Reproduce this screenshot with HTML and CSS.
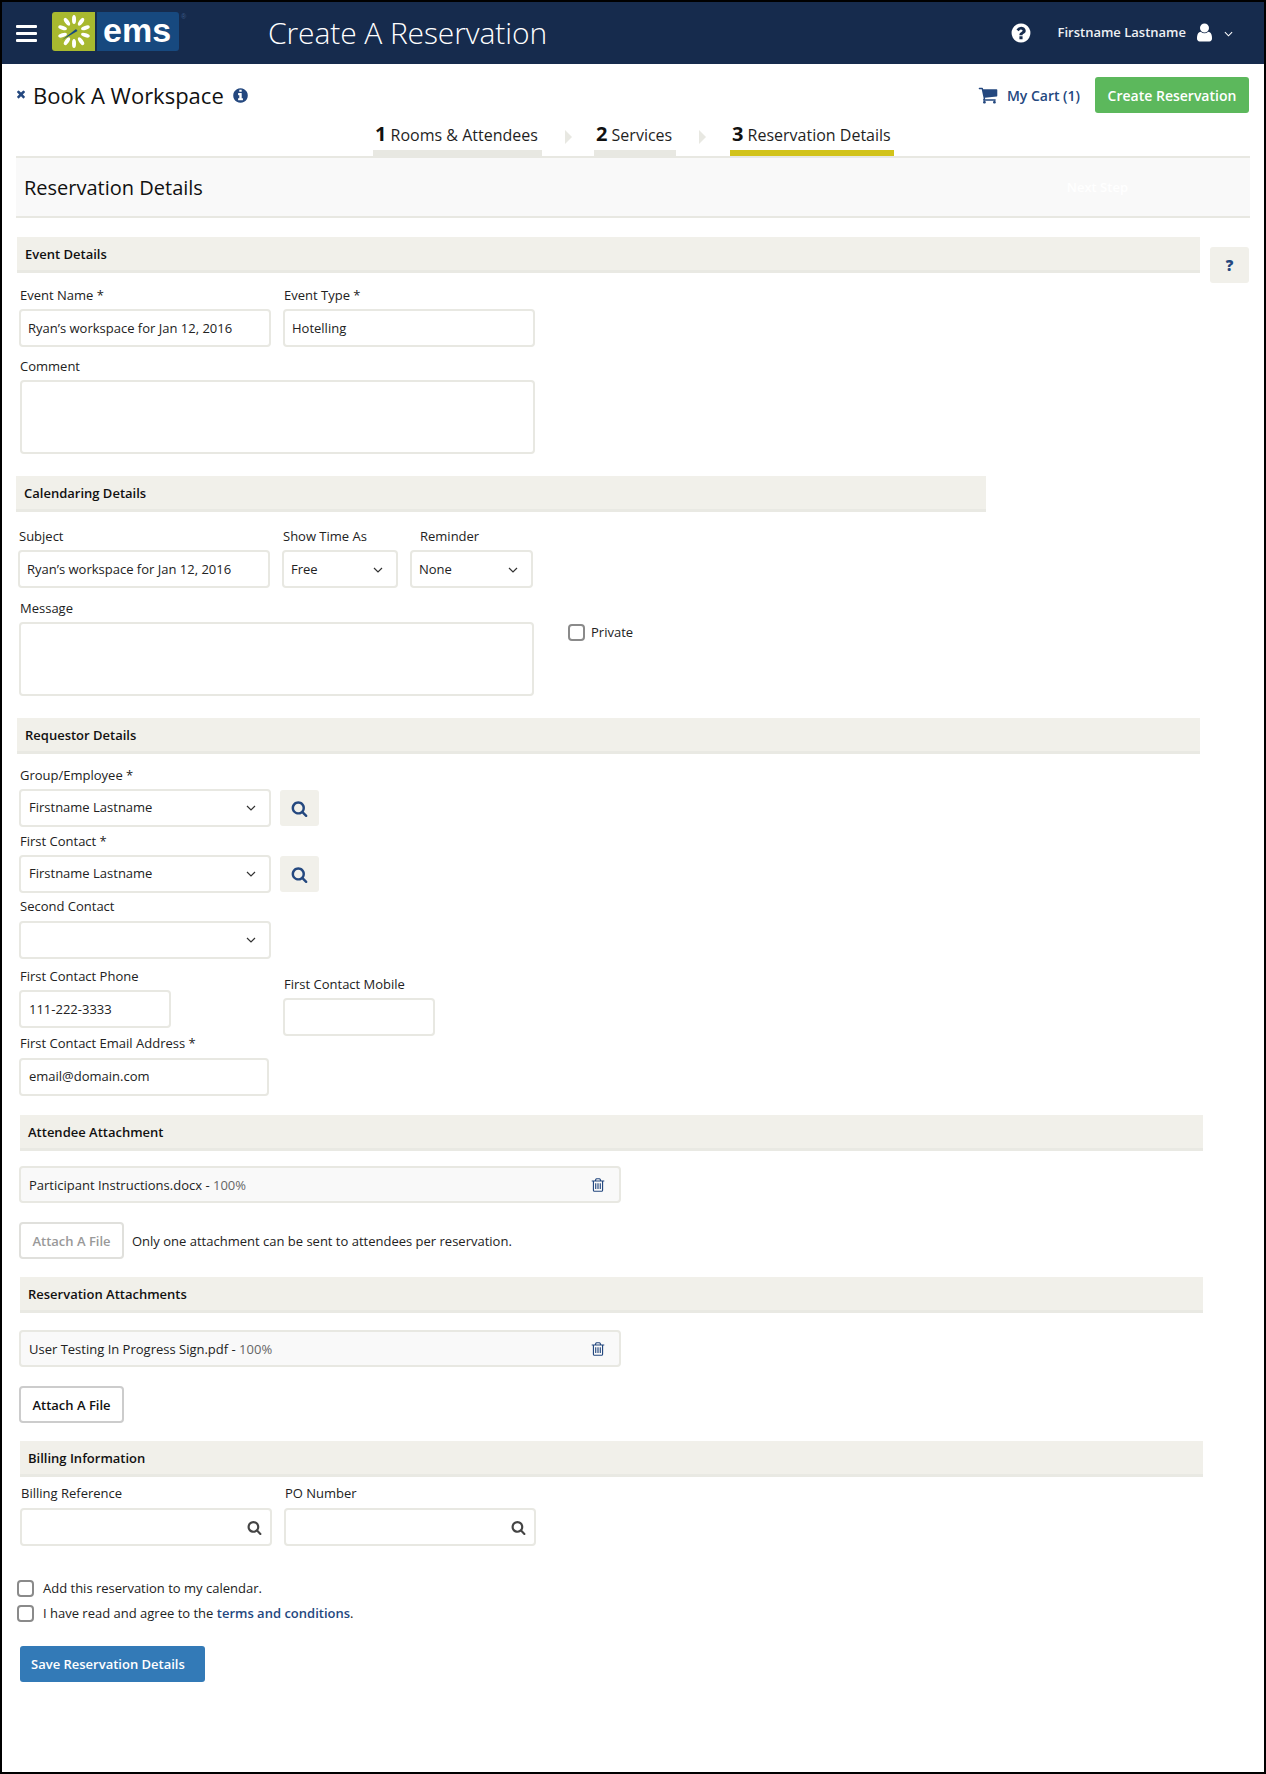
FILE: index.html
```html
<!DOCTYPE html>
<html lang="en-us">
<head>
    <meta charset="utf-8">
    <title>Create A Reservation</title>
    <link rel="stylesheet" href="styles.css">
</head>
<body>
    <svg class="icon-defs" xmlns="http://www.w3.org/2000/svg">
        <symbol id="i-search" viewBox="0 0 1792 1792"><path d="M1216 832q0-185-131.500-316.500t-316.500-131.500-316.500 131.500-131.500 316.500 131.500 316.500 316.500 131.500 316.500-131.500 131.500-316.500zm512 832q0 52-38 90t-90 38q-54 0-90-38l-343-342q-179 124-399 124-143 0-273.500-55.500t-225-150-150-225-55.500-273.500 55.500-273.500 150-225 225-150 273.500-55.500 273.500 55.500 225 150 150 225 55.500 273.500q0 220-124 399l343 343q37 37 37 90z"/></symbol>
        <symbol id="i-user" viewBox="0 0 1792 1792"><path d="M1536 1399q0 109-62.500 187t-150.500 78h-854q-88 0-150.500-78t-62.500-187q0-85 8.500-160.500t31.500-152 58.500-131 94-89 134.500-34.500q131 128 313 128t313-128q76 0 134.500 34.500t94 89 58.500 131 31.500 152 8.500 160.500zm-256-887q0 159-112.500 271.500t-271.500 112.500-271.500-112.500-112.500-271.500 112.500-271.500 271.500-112.500 271.500 112.500 112.500 271.500z"/></symbol>
        <symbol id="i-cart" viewBox="0 0 1792 1792"><path d="M704 1536q0 52-38 90t-90 38-90-38-38-90 38-90 90-38 90 38 38 90zm896 0q0 52-38 90t-90 38-90-38-38-90 38-90 90-38 90 38 38 90zm128-1088v512q0 24-16.500 42.500t-40.500 21.500l-1044 122q13 60 13 70 0 16-24 64h920q26 0 45 19t19 45-19 45-45 19h-1024q-26 0-45-19t-19-45q0-11 8-31.500t16-36 21.500-40 15.500-29.500l-177-823h-204q-26 0-45-19t-19-45 19-45 45-19h256q16 0 28.500 6.500t19.500 15.500 13 24.500 8 26 5.500 29.500 4.500 26h1201q26 0 45 19t19 45z"/></symbol>
        <symbol id="i-question" viewBox="0 0 1792 1792"><path d="M1024 1376v-192q0-14-9-23t-23-9h-192q-14 0-23 9t-9 23v192q0 14 9 23t23 9h192q14 0 23-9t9-23zm256-672q0-88-55.500-163t-138.500-116-170-41q-243 0-371 213-15 24 8 42l132 100q7 6 19 6 16 0 25-12 53-68 86-92 34-24 86-24 48 0 85.500 26t37.500 59q0 38-20 61t-68 45q-63 28-115.500 86.500t-52.500 125.500v36q0 14 9 23t23 9h192q14 0 23-9t9-23q0-19 21.500-49.500t54.500-49.500q32-18 49-28.500t46-35 44.500-48 28-60.500 12.500-81zm384 192q0 209-103 385.500t-279.500 279.500-385.500 103-385.500-103-279.500-279.500-103-385.500 103-385.500 279.500-279.500 385.500-103 385.500 103 279.500 279.500 103 385.500z"/></symbol>
        <symbol id="i-info" viewBox="0 0 1792 1792"><path d="M1152 1376v-160q0-14-9-23t-23-9h-96v-512q0-14-9-23t-23-9h-320q-14 0-23 9t-9 23v160q0 14 9 23t23 9h96v320h-96q-14 0-23 9t-9 23v160q0 14 9 23t23 9h448q14 0 23-9t9-23zm-128-896v-160q0-14-9-23t-23-9h-192q-14 0-23 9t-9 23v160q0 14 9 23t23 9h192q14 0 23-9t9-23zm640 416q0 209-103 385.500t-279.500 279.500-385.500 103-385.500-103-279.500-279.500-103-385.500 103-385.500 279.500-279.500 385.500-103 385.500 103 279.500 279.500 103 385.500z"/></symbol>
        <symbol id="i-times" viewBox="0 0 1792 1792"><path d="M1490 1322q0 40-28 68l-136 136q-28 28-68 28t-68-28l-294-294-294 294q-28 28-68 28t-68-28l-136-136q-28-28-28-68t28-68l294-294-294-294q-28-28-28-68t28-68l136-136q28-28 68-28t68 28l294 294 294-294q28-28 68-28t68 28l136 136q28 28 28 68t-28 68l-294 294 294 294q28 28 28 68z"/></symbol>
        <symbol id="i-trash" viewBox="0 0 1792 1792"><path d="M704 736v576q0 14-9 23t-23 9h-64q-14 0-23-9t-9-23v-576q0-14 9-23t23-9h64q14 0 23 9t9 23zm256 0v576q0 14-9 23t-23 9h-64q-14 0-23-9t-9-23v-576q0-14 9-23t23-9h64q14 0 23 9t9 23zm256 0v576q0 14-9 23t-23 9h-64q-14 0-23-9t-9-23v-576q0-14 9-23t23-9h64q14 0 23 9t9 23zm128 724v-948h-896v948q0 22 7 40.500t14.500 27 10.500 8.500h832q3 0 10.500-8.500t14.500-27 7-40.500zm-672-1076h448l-48-117q-7-9-17-11h-317q-10 2-17 11zm928 32v64q0 14-9 23t-23 9h-96v948q0 83-47 143.500t-113 60.500h-832q-66 0-113-58.500t-47-141.500v-952h-96q-14 0-23-9t-9-23v-64q0-14 9-23t23-9h309l70-167q15-37 54-63t79-26h320q40 0 79 26t54 63l70 167h309q14 0 23 9t9 23z"/></symbol>
        <symbol id="i-chevron" viewBox="0 0 10 6"><path d="M1 1l4 4 4-4" fill="none" stroke="currentColor" stroke-width="1.200"/></symbol>
    </svg>

    <div class="page">
        <header class="topbar">
            <div class="menu-btn"><span></span><span></span><span></span></div>
            <div class="logo">
                <svg class="logo-sun" width="43" height="39" viewBox="0 0 43 39">
                    <g fill="#fff">
                        <ellipse cx="22" cy="7.500" rx="2" ry="4.500"/>
                        <ellipse cx="22" cy="7.500" rx="2" ry="4.500" transform="rotate(36 22 19.500)"/>
                        <ellipse cx="22" cy="7.500" rx="2" ry="4.500" transform="rotate(72 22 19.500)"/>
                        <ellipse cx="22" cy="7.500" rx="2" ry="4.500" transform="rotate(108 22 19.500)"/>
                        <ellipse cx="22" cy="7.500" rx="2" ry="4.500" transform="rotate(144 22 19.500)"/>
                        <ellipse cx="22" cy="7.500" rx="2" ry="4.500" transform="rotate(180 22 19.500)"/>
                        <ellipse cx="22" cy="7.500" rx="2" ry="4.500" transform="rotate(216 22 19.500)"/>
                        <ellipse cx="22" cy="7.500" rx="2" ry="4.500" transform="rotate(252 22 19.500)"/>
                        <ellipse cx="22" cy="7.500" rx="2" ry="4.500" transform="rotate(288 22 19.500)"/>
                        <ellipse cx="22" cy="7.500" rx="2" ry="4.500" transform="rotate(324 22 19.500)"/>
                    </g>
                    <path d="M10 28L24 17l1.500 2z" fill="#17497f"/>
                </svg>
                <span class="logo-word">ems</span>
                <span class="logo-mark">®</span>
            </div>
            <div class="page-title">Create A Reservation</div>
            <div class="user-area">
                <svg class="help-icon"><use href="#i-question"/></svg>
                <span class="user-name">Firstname Lastname</span>
                <svg class="user-icon"><use href="#i-user"/></svg>
                <svg class="user-chevron"><use href="#i-chevron"/></svg>
            </div>
        </header>

        <div class="titlebar">
            <svg class="close-icon"><use href="#i-times"/></svg>
            <h1 class="book-title">Book A Workspace</h1>
            <svg class="info-icon"><use href="#i-info"/></svg>
            <a class="cart-link"><svg class="cart-icon"><use href="#i-cart"/></svg>My Cart (1)</a>
            <button class="create-btn">Create Reservation</button>
        </div>

        <nav class="steps">
            <div class="step step-rooms"><b>1</b> Rooms &amp; Attendees</div>
            <span class="step-arrow"></span>
            <div class="step step-services"><b>2</b> Services</div>
            <span class="step-arrow"></span>
            <div class="step step-details"><b>3</b> Reservation Details</div>
        </nav>

        <div class="panel-head">
            <h2>Reservation Details</h2>
            <span class="next-step">Next Step</span>
        </div>

        <div class="event-wrap">
            <div class="event-main">
                <div class="bar">Event Details</div>
                <div class="row event-row">
                    <div class="field w252"><label>Event Name *</label><div class="control">Ryan’s workspace for Jan 12, 2016</div></div>
                    <div class="field w252"><label>Event Type *</label><div class="control">Hotelling</div></div>
                </div>
                <div class="field comment-field"><label>Comment</label><div class="control area"></div></div>
            </div>
            <button class="hint-btn">?</button>
        </div>

        <div class="bar bar-calendar">Calendaring Details</div>
        <div class="row subject-row">
            <div class="field w252"><label>Subject</label><div class="control">Ryan’s workspace for Jan 12, 2016</div></div>
            <div class="field w116"><label>Show Time As</label><div class="control select">Free<svg class="chevron"><use href="#i-chevron"/></svg></div></div>
            <div class="field w123 reminder"><label>Reminder</label><div class="control select">None<svg class="chevron"><use href="#i-chevron"/></svg></div></div>
        </div>
        <div class="row message-row">
            <div class="field w515"><label>Message</label><div class="control area"></div></div>
            <div class="check private-check"><span class="box"></span>Private</div>
        </div>

        <div class="bar bar-requestor">Requestor Details</div>
        <div class="field-stack group-stack">
            <div class="field"><label>Group/Employee *</label>
                <div class="row"><div class="control select w252">Firstname Lastname<svg class="chevron"><use href="#i-chevron"/></svg></div><button class="find-btn"><svg><use href="#i-search"/></svg></button></div>
            </div>
            <div class="field contact-field"><label>First Contact *</label>
                <div class="row"><div class="control select w252">Firstname Lastname<svg class="chevron"><use href="#i-chevron"/></svg></div><button class="find-btn"><svg><use href="#i-search"/></svg></button></div>
            </div>
            <div class="field second-field"><label>Second Contact</label><div class="control select w252"><span></span><svg class="chevron"><use href="#i-chevron"/></svg></div></div>
        </div>
        <div class="row phone-row">
            <div class="phone-col">
                <div class="field"><label>First Contact Phone</label><div class="control w152">111-222-3333</div></div>
                <div class="field email-field"><label>First Contact Email Address *</label><div class="control w250">email@domain.com</div></div>
            </div>
            <div class="field mobile-field"><label>First Contact Mobile</label><div class="control w152"></div></div>
        </div>

        <div class="bar bar-shift bar-attendee">Attendee Attachment</div>
        <div class="file-row file-attendee"><span>Participant Instructions.docx - <em>100%</em></span><svg class="trash"><use href="#i-trash"/></svg></div>
        <div class="attach-row">
            <button class="attach-btn is-off">Attach A File</button>
            <span class="attach-note">Only one attachment can be sent to attendees per reservation.</span>
        </div>

        <div class="bar bar-shift bar-res">Reservation Attachments</div>
        <div class="file-row file-res"><span>User Testing In Progress Sign.pdf - <em>100%</em></span><svg class="trash"><use href="#i-trash"/></svg></div>
        <div class="attach-row">
            <button class="attach-btn">Attach A File</button>
        </div>

        <div class="bar bar-shift bar-billing">Billing Information</div>
        <div class="row billing-row">
            <div class="field w252"><label>Billing Reference</label><div class="control select"><span></span><svg class="lookup"><use href="#i-search"/></svg></div></div>
            <div class="field w252"><label>PO Number</label><div class="control select"><span></span><svg class="lookup"><use href="#i-search"/></svg></div></div>
        </div>

        <div class="check calendar-check"><span class="box"></span>Add this reservation to my calendar.</div>
        <div class="check terms-check"><span class="box"></span><span>I have read and agree to the <a class="terms">terms and conditions</a>.</span></div>

        <button class="save-btn">Save Reservation Details</button>
    </div>
</body>
</html>
```

FILE: styles.css
```css
* {
    box-sizing: border-box;
}
body {
    margin: 0;
    font-family: "Open Sans", Arial, sans-serif;
    font-size: 13px;
    color: #1f1f1f;
    background-color: #fff;
}
.icon-defs {
    display: none;
}
.page {
    width: 1266px;
    height: 1774px;
    border: 2px solid #000;
    overflow: hidden;
}
button {
    font-family: inherit;
}

/* top bar */
.topbar {
    display: flex;
    align-items: center;
    height: 62px;
    background-color: #162b4d;
    color: #fff;
    padding-left: 14px;
}
.menu-btn {
    display: flex;
    flex-direction: column;
    gap: 4px;
    width: 21px;
}
.menu-btn span {
    height: 3px;
    background-color: #fff;
    border-radius: 1px;
}
.logo {
    display: flex;
    width: 136px;
    height: 39px;
    margin-left: 15px;
    margin-top: -3px;
}
.logo-sun {
    background-color: #a8b92f;
    border-radius: 3px 0 0 3px;
}
.logo-word {
    width: 82px;
    height: 39px;
    margin-left: 2px;
    padding-left: 6px;
    background-color: #17497f;
    border-radius: 0 3px 3px 0;
    font-family: "Liberation Sans", Arial, sans-serif;
    font-weight: bold;
    font-size: 34px;
    line-height: 36px;
    color: #fff;
}
.logo-mark {
    margin-left: 2px;
    font-family: "Liberation Sans", Arial, sans-serif;
    font-size: 7px;
    line-height: 10px;
    color: #3d5a85;
}
.page-title {
    margin-left: 80px;
    font-size: 30px;
    font-weight: 300;
    letter-spacing: -0.1px;
    margin-top: -2px;
}
.user-area {
    margin-left: auto;
    display: flex;
    align-items: center;
    padding-right: 31px;
    margin-top: -2px;
}
.help-icon {
    width: 22px;
    height: 22px;
    fill: #fff;
    margin-top: 1px;
}
.user-name {
    margin-left: 26px;
    font-size: 13px;
    font-weight: 600;
    color: #eef0f4;
}
.user-icon {
    width: 21px;
    height: 21px;
    fill: #fff;
    margin-left: 8px;
}
.user-chevron {
    width: 9px;
    height: 6px;
    margin-left: 9px;
    margin-top: 3px;
    color: #fff;
}

/* title row */
.titlebar {
    display: flex;
    align-items: center;
    height: 36px;
    margin-top: 13px;
    padding-left: 13px;
    padding-right: 15px;
}
.close-icon {
    width: 12px;
    height: 12px;
    fill: #24487f;
    margin-top: -2px;
}
.book-title {
    margin: 0 0 0 6px;
    font-size: 22px;
    font-weight: 400;
    color: #111;
}
.info-icon {
    width: 17px;
    height: 17px;
    fill: #24487f;
    margin-left: 8px;
}
.cart-link {
    margin-left: auto;
    display: flex;
    align-items: center;
    font-size: 14px;
    font-weight: 600;
    color: #24487f;
}
.cart-icon {
    width: 20px;
    height: 20px;
    fill: #24487f;
    margin-right: 9px;
}
.create-btn {
    margin-left: 15px;
    width: 154px;
    height: 36px;
    border: none;
    border-radius: 3px;
    background-color: #5cb85c;
    color: #fff;
    font-size: 14px;
    font-weight: 600;
}

/* steps */
.steps {
    display: flex;
    align-items: flex-start;
    gap: 23px;
    height: 43px;
    padding-left: 371px;
}
.step {
    height: 43px;
    padding: 10px 0 0 2px;
    font-size: 16px;
    line-height: 24px;
    border-bottom: 6px solid #e8e8e2;
    white-space: nowrap;
}
.step b {
    font-size: 20px;
    font-weight: 700;
    color: #111;
    line-height: 20px;
}
.step-rooms {
    width: 169px;
}
.step-services {
    width: 82px;
    margin-left: -1px;
}
.step-details {
    width: 164px;
    margin-left: 1px;
    border-bottom-color: #d2c31a;
}
.step-arrow {
    width: 0;
    height: 0;
    margin-top: 17px;
    border-left: 7px solid #e8e8e2;
    border-top: 7px solid transparent;
    border-bottom: 7px solid transparent;
}

/* panel heading */
.panel-head {
    display: flex;
    align-items: center;
    justify-content: space-between;
    margin-left: 14px;
    width: 1234px;
    height: 62px;
    padding: 0 122px 0 8px;
    background-color: #f9f9f9;
    border-top: 2px solid #e8e8e2;
    border-bottom: 2px solid #e8e8e2;
}
.panel-head h2 {
    margin: 0;
    font-size: 20px;
    font-weight: 400;
    color: #111;
}
.next-step {
    font-size: 13px;
    font-weight: 600;
    color: #fff;
}

/* section bars */
.bar {
    height: 36px;
    padding: 0 8px;
    display: flex;
    align-items: center;
    background-color: #f1f0ea;
    border-bottom: 3px solid #e9e9e3;
    font-size: 13px;
    font-weight: 600;
    color: #111;
}
.event-wrap {
    display: flex;
    margin: 19px 0 0 15px;
}
.event-main {
    width: 1183px;
}
.hint-btn {
    width: 39px;
    height: 36px;
    margin: 10px 0 0 10px;
    border: none;
    border-radius: 3px;
    background-color: #f1f0ea;
    color: #24487f;
    font-size: 15px;
    font-weight: 800;
}
.bar-calendar {
    margin: 22px 0 0 14px;
    width: 970px;
}
.bar-requestor {
    margin: 22px 0 0 15px;
    width: 1183px;
}
.bar-shift {
    margin-left: 18px;
    width: 1183px;
}
.bar-attendee {
    margin-top: 19px;
}
.bar-res,
.bar-billing {
    margin-top: 18px;
}

/* fields */
.row {
    display: flex;
}
.field label {
    display: block;
    height: 18px;
    line-height: 16px;
    margin-bottom: 4px;
    padding-left: 1px;
    color: #222;
}
.control {
    display: flex;
    align-items: center;
    height: 38px;
    padding: 0 8px;
    background-color: #fff;
    border: 2px solid #e8e8e2;
    border-radius: 4px;
    color: #222;
}
.select {
    justify-content: space-between;
    padding-right: 13px;
}
.area {
    height: 74px;
}
.chevron {
    width: 10px;
    height: 6px;
    color: #333;
    margin-top: 2px;
}
.lookup {
    width: 15px;
    height: 15px;
    fill: #444;
    margin-right: -5px;
}
.w116 {
    width: 116px;
}
.w123 {
    width: 123px;
}
.w152 {
    width: 152px;
}
.w250 {
    width: 250px;
}
.w252 {
    width: 252px;
}
.w515 {
    width: 515px;
}
.event-row {
    gap: 12px;
    margin: 14px 0 0 2px;
}
.event-row .control,
.subject-row .control {
    padding-left: 7px;
}
.comment-field {
    width: 515px;
    margin: 11px 0 0 3px;
}
.comment-field label {
    padding-left: 0;
}
.subject-row {
    gap: 12px;
    margin: 16px 0 0 16px;
}
.reminder label {
    padding-left: 10px;
}
.message-row {
    margin: 12px 0 0 17px;
}
.check {
    display: flex;
    align-items: center;
    gap: 9px;
    color: #222;
}
.box {
    display: block;
    width: 17px;
    height: 17px;
    background-color: #fff;
    border: 2px solid #8a8a8a;
    border-radius: 4px;
}
.private-check {
    align-self: flex-start;
    margin: 23px 0 0 34px;
    gap: 6px;
}
.group-stack {
    margin: 13px 0 0 17px;
}
.group-stack .select,
.email-field .control {
    padding-bottom: 2px;
}
.find-btn {
    display: flex;
    align-items: center;
    justify-content: center;
    width: 39px;
    height: 36px;
    margin: 1px 0 0 9px;
    border: none;
    border-radius: 3px;
    background-color: #f1f0ea;
}
.find-btn svg {
    width: 17px;
    height: 17px;
    fill: #24487f;
}
.contact-field {
    margin-top: 6px;
}
.second-field {
    margin-top: 5px;
}
.second-field label {
    margin-bottom: 5px;
}
.phone-row {
    gap: 12px;
    margin: 9px 0 0 17px;
}
.phone-col {
    width: 252px;
}
.email-field {
    margin-top: 7px;
}
.email-field label {
    margin-bottom: 5px;
}
.mobile-field {
    margin-top: 8px;
}

/* attachments */
.file-row {
    display: flex;
    align-items: center;
    justify-content: space-between;
    width: 602px;
    height: 37px;
    margin-left: 17px;
    padding: 0 13px 0 8px;
    background-color: #f9f9f9;
    border: 2px solid #e8e8e2;
    border-radius: 4px;
    color: #222;
}
.file-row em {
    font-style: normal;
    color: #666;
}
.file-attendee {
    margin-top: 15px;
}
.file-res {
    margin-top: 17px;
}
.trash {
    width: 16px;
    height: 16px;
    fill: #24487f;
}
.attach-row {
    display: flex;
    align-items: center;
    margin: 19px 0 0 17px;
}
.attach-btn {
    width: 105px;
    height: 37px;
    padding: 0;
    background-color: #fff;
    border: 2px solid #ccc;
    border-radius: 4px;
    color: #111;
    font-size: 13px;
    font-weight: 600;
}
.attach-btn.is-off {
    border-color: #e0e0dc;
    color: #999;
}
.attach-note {
    margin-left: 8px;
    color: #222;
}

/* billing */
.billing-row {
    gap: 12px;
    margin: 8px 0 0 18px;
}
.billing-row label {
    margin-bottom: 5px;
}
.calendar-check {
    margin: 33px 0 0 15px;
}
.terms-check {
    margin: 7px 0 0 15px;
}
.terms {
    color: #24487f;
    font-weight: 600;
}
.save-btn {
    display: block;
    width: 185px;
    height: 36px;
    margin: 24px 0 0 18px;
    padding: 0 0 0 11px;
    border: none;
    border-radius: 3px;
    background-color: #337ab7;
    color: #fff;
    font-size: 13px;
    font-weight: 600;
    text-align: left;
}
```
